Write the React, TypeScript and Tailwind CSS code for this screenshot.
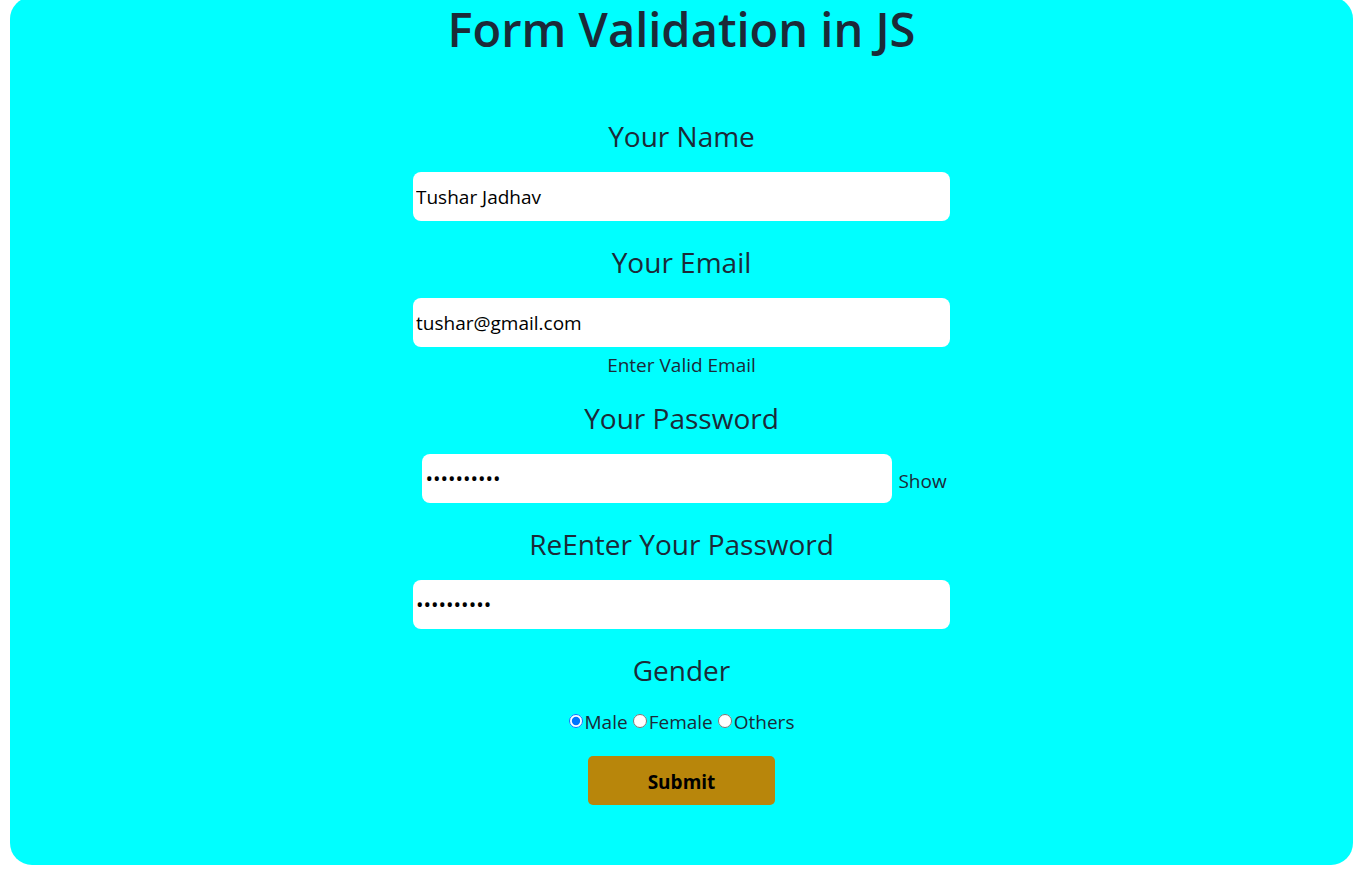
import React from "react";

const font = { fontFamily: '"Open Sans", "Noto Sans", sans-serif' };

function Label({ children }: { children: React.ReactNode }) {
  return (
    <div className="h-[36px] leading-[36px] text-[28px] text-[#1c2a38] text-center">{children}</div>
  );
}

export default function App() {
  return (
    <div className="w-[1359px] h-[878px] bg-white overflow-hidden" style={font}>
      <div className="ml-[10px] w-[1343px] mt-[-3px] h-[868px] rounded-[22px] bg-[#00ffff] flex flex-col items-center">
        <h1 className="mt-[4px] h-[56px] leading-[56px] text-[47px] font-semibold text-[#1c2a38]">
          Form Validation in JS
        </h1>
        <div className="mt-[61px]">
          <Label>Your Name</Label>
        </div>
        <input
          readOnly
          value="Tushar Jadhav"
          className="mt-[18px] w-[537px] h-[49px] rounded-[8px] bg-white px-[3px] text-[19px] text-black outline-none"
        />
        <div className="mt-[23px]">
          <Label>Your Email</Label>
        </div>
        <input
          readOnly
          value="tushar@gmail.com"
          className="mt-[18px] w-[537px] h-[49px] rounded-[8px] bg-white px-[3px] text-[19px] text-black outline-none"
        />
        <div className="mt-[5px] h-[26px] leading-[26px] text-[19px] text-[#1c2a38]">Enter Valid Email</div>
        <div className="mt-[22px]">
          <Label>Your Password</Label>
        </div>
        <div className="mt-[18px] flex items-center gap-[6px] pl-[6px]">
          <input
            readOnly
            type="password"
            value="1234567890"
            className="w-[470px] h-[49px] rounded-[8px] bg-white px-[3px] text-[20px] text-black outline-none"
          />
          <span className="mt-[5px] text-[19px] text-[#1c2a38]">Show</span>
        </div>
        <div className="mt-[23px]">
          <Label>ReEnter Your Password</Label>
        </div>
        <input
          readOnly
          type="password"
          value="1234567890"
          className="mt-[18px] w-[537px] h-[49px] rounded-[8px] bg-white px-[3px] text-[20px] text-black outline-none"
        />
        <div className="mt-[23px]">
          <Label>Gender</Label>
        </div>
        <div className="mt-[21px] h-[26px] flex items-center text-[19px] text-[#1c2a38]">
          <input type="radio" name="g" defaultChecked className="w-[14px] h-[14px] m-0 mr-[2px] mt-[-2px]" />
          <span>Male</span>
          <input type="radio" name="g" className="w-[14px] h-[14px] m-0 ml-[5px] mr-[2px] mt-[-2px]" />
          <span>Female</span>
          <input type="radio" name="g" className="w-[14px] h-[14px] m-0 ml-[5px] mr-[2px] mt-[-2px]" />
          <span>Others</span>
        </div>
        <button className="mt-[21px] w-[187px] h-[49px] rounded-[5px] bg-[#b8860b] text-[19px] font-bold text-black pt-[4px]">
          Submit
        </button>
      </div>
    </div>
  );
}
